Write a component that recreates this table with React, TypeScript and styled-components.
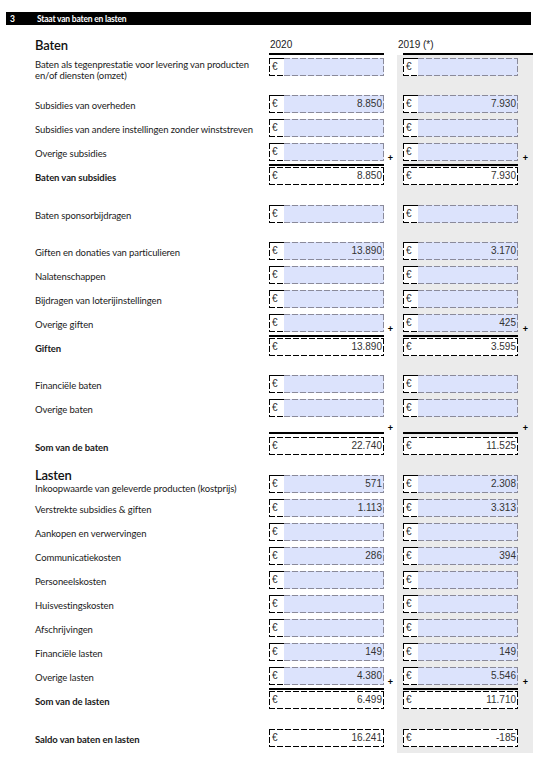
import React from 'react';
import styled, { createGlobalStyle, css } from 'styled-components';

const GlobalStyle = createGlobalStyle`
  html, body { margin: 0; padding: 0; background: #fff; }
  body { font-family: Lato, "Noto Sans", sans-serif; }
`;

const GREY = '#ebebeb';
const BLUE = '#dce3fc';
const dashH = (c: string) => `repeating-linear-gradient(90deg, ${c} 0 6px, transparent 6px 8px)`;
const dashV = (c: string) => `repeating-linear-gradient(180deg, ${c} 0 6px, transparent 6px 8px)`;

const Page = styled.div`
  width: 541px;
  padding: 12px 0 0 6px;
  box-sizing: border-box;
`;

const TitleBar = styled.div`
  width: 525px;
  height: 13px;
  background: #000;
  color: #fff;
  display: flex;
  align-items: center;
  font: 700 8.5px Lato, "Noto Sans", sans-serif;
  letter-spacing: -0.2px;
`;

const TitleNum = styled.span`
  width: 27px;
  padding-left: 4px;
`;

const Table = styled.div`
  margin-left: 29px;
  display: flex;
  flex-direction: column;
`;

type VAlign = 'flex-start' | 'center' | 'flex-end';

const Row = styled.div<{ $h: number }>`
  display: grid;
  grid-template-columns: 234px 115px 13px 136px;
  height: ${p => p.$h}px;
`;

const LabelCell = styled.div<{ $bold?: boolean; $v?: VAlign }>`
  display: flex;
  flex-direction: column;
  justify-content: ${p => p.$v || 'center'};
  padding: 4px 0 2px;
  box-sizing: border-box;
  font-size: 9.5px;
  line-height: 11px;
  letter-spacing: -0.1px;
  color: #1a1a1a;
  font-weight: ${p => (p.$bold ? 700 : 400)};
`;

const LabelText = styled.span`
  max-width: 222px;
`;

const Heading = styled.div`
  font-size: 13px;
  line-height: 15px;
  font-weight: 600;
  letter-spacing: -0.2px;
  color: #111;
`;

const ValueCell = styled.div<{ $v?: VAlign; $rule?: 'top' | 'bottom' }>`
  display: flex;
  align-items: ${p => p.$v || 'center'};
  padding: 3px 0;
  box-sizing: border-box;
  ${p => p.$rule === 'top' && css`box-shadow: inset 0 2px 0 #000;`}
  ${p => p.$rule === 'bottom' && css`box-shadow: inset 0 -2px 0 #000;`}
`;

const PlusCell = styled.div<{ $w: number }>`
  width: ${p => p.$w}px;
  display: flex;
  align-items: flex-end;
  justify-content: center;
  padding-bottom: 2px;
  box-sizing: border-box;
  font: 700 9px/8px "Liberation Sans", Arial, sans-serif;
  color: #000;
`;

const PriorCell = styled.div<{ $grey?: boolean }>`
  display: flex;
  padding-left: 6px;
  background: ${p => (p.$grey ? GREY : 'transparent')};
`;

const PriorValue = styled(ValueCell)`
  width: 115px;
`;

const YearHead = styled.div`
  display: flex;
  align-items: flex-end;
  padding: 0 0 4px 1px;
  box-sizing: border-box;
  box-shadow: inset 0 -2px 0 #000;
  font: 10px/12px "Liberation Sans", Arial, sans-serif;
  color: #222;
`;

const PriorHead = styled(YearHead)`
  margin-left: 6px;
  padding-left: 0;
  text-indent: -5px;
`;

const HeadLabel = styled.div`
  display: flex;
  align-items: flex-end;
  padding-bottom: 2px;
`;

const Field = styled.div<{ $total?: boolean }>`
  width: 115px;
  height: 18px;
  display: flex;
  box-sizing: border-box;
  font: 10px/18px "Liberation Sans", Arial, sans-serif;
  color: #333;
  ${p =>
    p.$total &&
    css`
      background: ${dashH('#000')} top left / 100% 1px no-repeat,
        ${dashH('#000')} bottom left / 100% 1px no-repeat,
        ${dashV('#000')} top left / 1px 100% no-repeat,
        ${dashV('#000')} top right / 1px 100% no-repeat, #fff;
    `}
`;

const Euro = styled.div<{ $total?: boolean }>`
  width: 15px;
  padding-left: 3px;
  box-sizing: border-box;
  ${p =>
    !p.$total &&
    css`
      background: linear-gradient(#000, #000) top left / 100% 1px no-repeat,
        ${dashH('#000')} bottom left / 100% 1px no-repeat,
        ${dashV('#000')} top left / 1px 100% no-repeat, #fff;
    `}
`;

const Amount = styled.div<{ $total?: boolean }>`
  flex: 1;
  text-align: right;
  padding-right: 2px;
  ${p =>
    !p.$total &&
    css`
      background: ${dashH('#8a8a9a')} top left / 100% 1px no-repeat,
        ${dashH('#8a8a9a')} bottom left / 100% 1px no-repeat,
        ${dashV('#8a8a9a')} top right / 1px 100% no-repeat, ${BLUE};
    `}
`;

const Money: React.FC<{ value?: string; total?: boolean }> = ({ value, total }) => (
  <Field $total={total}>
    <Euro $total={total}>€</Euro>
    <Amount $total={total}>{value}</Amount>
  </Field>
);

type Line = {
  label?: string;
  heading?: string;
  bold?: boolean;
  a?: string;
  b?: string;
  total?: boolean;
  plus?: boolean;
  h?: number;
  v?: VAlign;
  labelV?: VAlign;
  rule?: 'top';
};

const DataRow: React.FC<{ line: Line }> = ({ line }) => {
  const h = line.h ?? 24;
  return (
    <Row $h={h}>
      <LabelCell $bold={line.bold} $v={line.labelV || line.v}>
        {line.heading && <Heading>{line.heading}</Heading>}
        {line.label && <LabelText>{line.label}</LabelText>}
      </LabelCell>
      <ValueCell $v={line.v} $rule={line.rule}>
        <Money value={line.a} total={line.total} />
      </ValueCell>
      <PlusCell $w={13}>{line.plus ? '+' : ''}</PlusCell>
      <PriorCell $grey>
        <PriorValue $v={line.v} $rule={line.rule}>
          <Money value={line.b} total={line.total} />
        </PriorValue>
        <PlusCell $w={15}>{line.plus ? '+' : ''}</PlusCell>
      </PriorCell>
    </Row>
  );
};

const Gap: React.FC<{ h: number }> = ({ h }) => (
  <Row $h={h}>
    <div />
    <div />
    <div />
    <PriorCell $grey />
  </Row>
);

const RuleRow: React.FC<{ h: number }> = ({ h }) => (
  <Row $h={h}>
    <div />
    <ValueCell $rule="bottom" />
    <PlusCell $w={13}>+</PlusCell>
    <PriorCell $grey>
      <PriorValue $rule="bottom" />
      <PlusCell $w={15}>+</PlusCell>
    </PriorCell>
  </Row>
);

const App: React.FC = () => (
  <Page>
    <GlobalStyle />
    <TitleBar>
      <TitleNum>3</TitleNum>
      <span>Staat van baten en lasten</span>
    </TitleBar>
    <Table>
      <Row $h={30}>
        <HeadLabel>
          <Heading>Baten</Heading>
        </HeadLabel>
        <YearHead>2020</YearHead>
        <div />
        <PriorHead>2019 (*)</PriorHead>
      </Row>
      <DataRow
        line={{
          label: 'Baten als tegenprestatie voor levering van producten en/of diensten (omzet)',
          h: 37,
          v: 'flex-start',
          labelV: 'flex-start',
        }}
      />
      <DataRow line={{ label: 'Subsidies van overheden', a: '8.850', b: '7.930' }} />
      <DataRow line={{ label: 'Subsidies van andere instellingen zonder winststreven' }} />
      <DataRow line={{ label: 'Overige subsidies', plus: true }} />
      <DataRow line={{ label: 'Baten van subsidies', bold: true, a: '8.850', b: '7.930', total: true, rule: 'top' }} />
      <Gap h={14} />
      <DataRow line={{ label: 'Baten sponsorbijdragen' }} />
      <Gap h={13} />
      <DataRow line={{ label: 'Giften en donaties van particulieren', a: '13.890', b: '3.170' }} />
      <DataRow line={{ label: 'Nalatenschappen' }} />
      <DataRow line={{ label: 'Bijdragen van loterijinstellingen' }} />
      <DataRow line={{ label: 'Overige giften', b: '425', plus: true }} />
      <DataRow line={{ label: 'Giften', bold: true, a: '13.890', b: '3.595', total: true, rule: 'top' }} />
      <Gap h={13} />
      <DataRow line={{ label: 'Financiële baten' }} />
      <DataRow line={{ label: 'Overige baten' }} />
      <RuleRow h={14} />
      <DataRow line={{ label: 'Som van de baten', bold: true, a: '22.740', b: '11.525', total: true }} />
      <DataRow
        line={{
          heading: 'Lasten',
          label: 'Inkoopwaarde van geleverde producten (kostprijs)',
          a: '571',
          b: '2.308',
          h: 38,
          v: 'flex-end',
        }}
      />
      <DataRow line={{ label: 'Verstrekte subsidies & giften', a: '1.113', b: '3.313' }} />
      <DataRow line={{ label: 'Aankopen en verwervingen' }} />
      <DataRow line={{ label: 'Communicatiekosten', a: '286', b: '394' }} />
      <DataRow line={{ label: 'Personeelskosten' }} />
      <DataRow line={{ label: 'Huisvestingskosten' }} />
      <DataRow line={{ label: 'Afschrijvingen' }} />
      <DataRow line={{ label: 'Financiële lasten', a: '149', b: '149' }} />
      <DataRow line={{ label: 'Overige lasten', a: '4.380', b: '5.546', plus: true }} />
      <DataRow line={{ label: 'Som van de lasten', bold: true, a: '6.499', b: '11.710', total: true, rule: 'top' }} />
      <Gap h={14} />
      <DataRow line={{ label: 'Saldo van baten en lasten', bold: true, a: '16.241', b: '-185', total: true }} />
      <Gap h={3} />
    </Table>
  </Page>
);

export default App;
